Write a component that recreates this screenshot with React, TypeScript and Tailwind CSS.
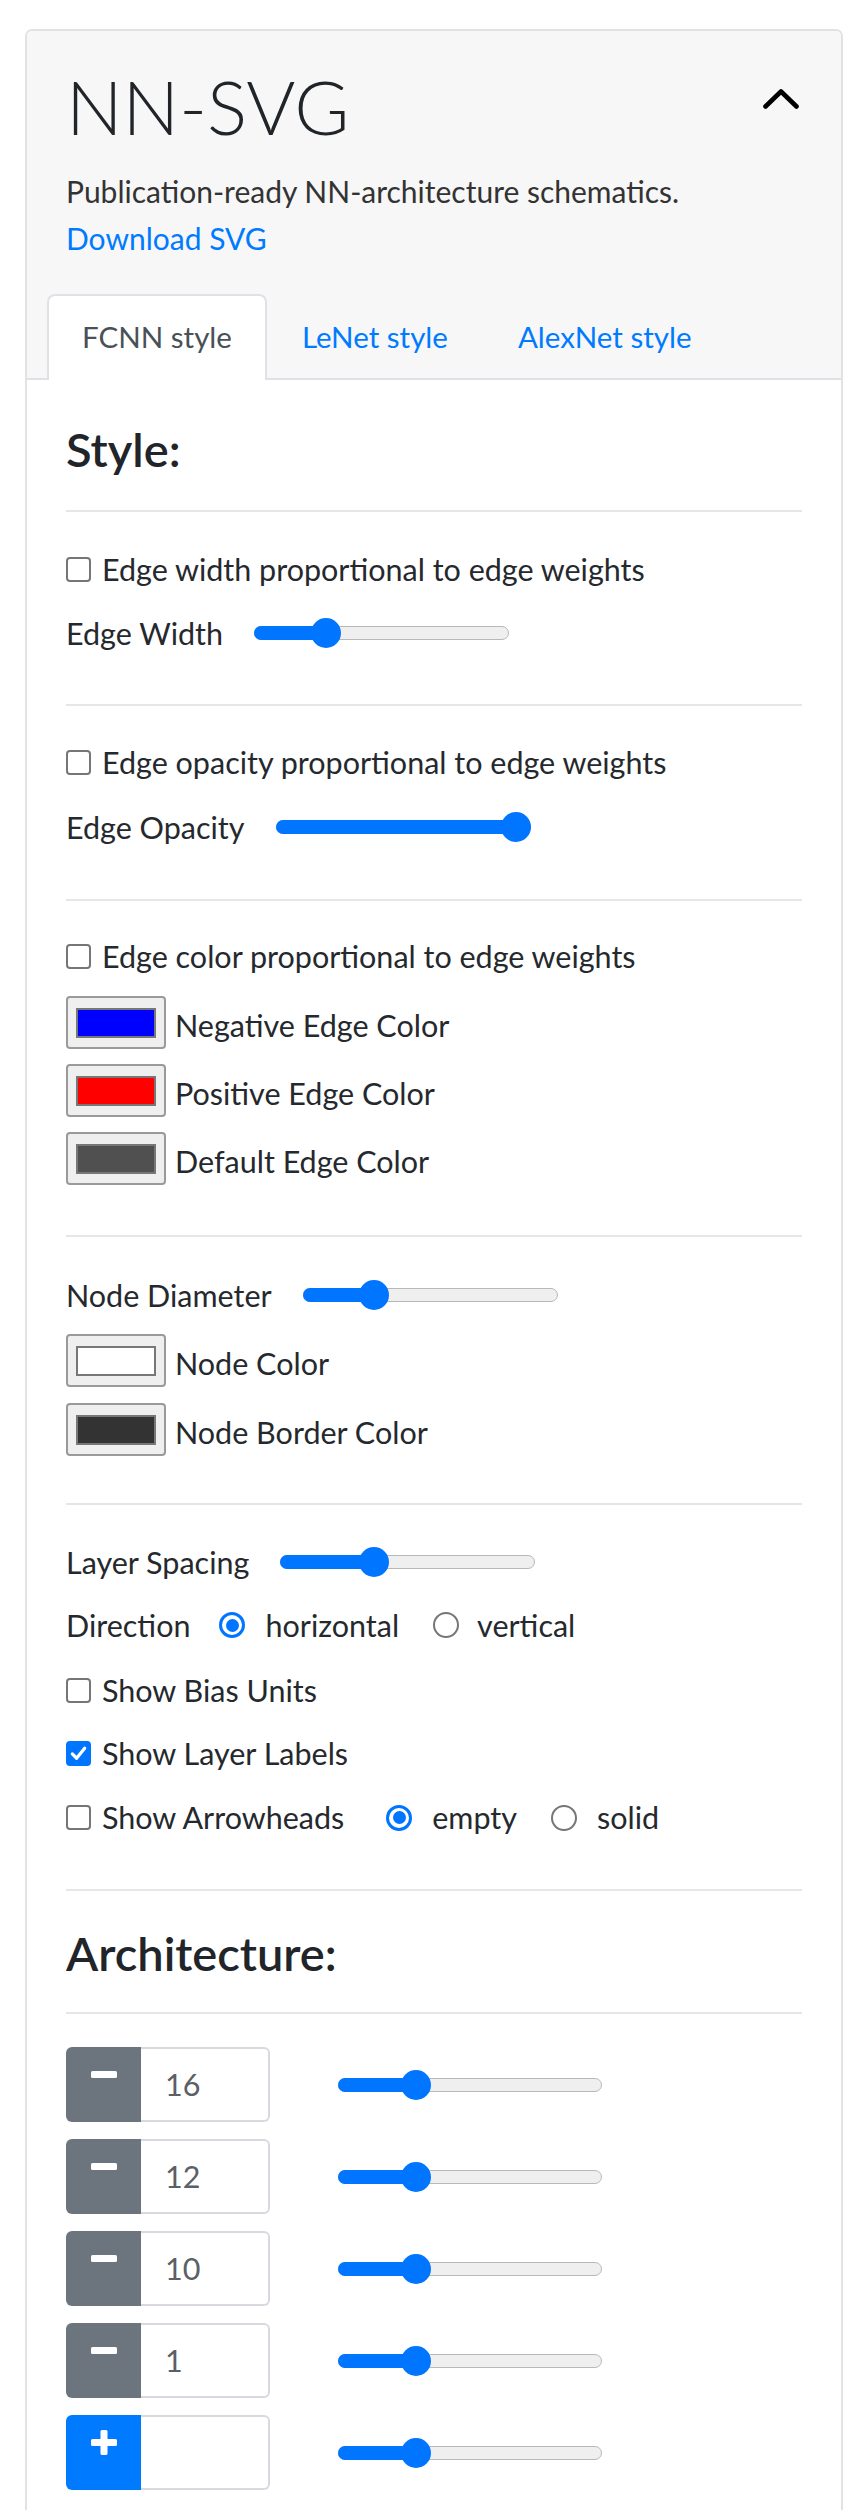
import React from 'react';

const font = "font-['Lato',sans-serif]";

const Checkbox = ({ checked = false }: { checked?: boolean }) =>
  checked ? (
    <span className="flex h-[25px] w-[25px] shrink-0 items-center justify-center rounded-[4px] bg-[#0075ff]">
      <svg width="19" height="19" viewBox="0 0 20 20">
        <polyline points="3.5,10.5 8,15 16.5,4.5" fill="none" stroke="#fff" strokeWidth="3.4" strokeLinecap="round" strokeLinejoin="round" />
      </svg>
    </span>
  ) : (
    <span className="block h-[25px] w-[25px] shrink-0 rounded-[4px] border-2 border-[#767676] bg-white" />
  );

const Radio = ({ checked = false }: { checked?: boolean }) =>
  checked ? (
    <span className="flex h-[26px] w-[26px] shrink-0 items-center justify-center rounded-full border-[3px] border-[#0075ff] bg-white">
      <span className="block h-[13px] w-[13px] rounded-full bg-[#0075ff]" />
    </span>
  ) : (
    <span className="block h-[26px] w-[26px] shrink-0 rounded-full border-2 border-[#767676] bg-white" />
  );

const Slider = ({ value, width = 255 }: { value: number; width?: number }) => {
  const center = 15 + (width - 30) * value;
  return (
    <div className="relative flex h-[30px] shrink-0 items-center" style={{ width }}>
      <div className="h-[14px] w-full rounded-full border border-[#b8b8b8] bg-[#efefef]" />
      <div className="absolute left-0 top-[8px] h-[14px] rounded-l-full bg-[#0075ff]" style={{ width: center }} />
      <div className="absolute top-0 h-[30px] w-[30px] rounded-full bg-[#0075ff]" style={{ left: center - 15 }} />
    </div>
  );
};

const Swatch = ({ color, label }: { color: string; label: string }) => (
  <div className="flex items-end">
    <div className="flex h-[53px] w-[100px] shrink-0 items-center justify-center rounded-[4px] border-2 border-[#9a9a9a] bg-[#efefef]">
      <div className="h-[30px] w-[80px] border-2 border-[#777777]" style={{ backgroundColor: color }} />
    </div>
    <span className="ml-[9px] h-[47px] leading-[47px]">{label}</span>
  </div>
);

const Hr = ({ className }: { className: string }) => <div className={`h-[2px] bg-[#e6e6e6] ${className}`} />;

const Row = ({ className, children }: { className: string; children: React.ReactNode }) => (
  <div className={`flex h-[47px] items-center leading-[47px] ${className}`}>{children}</div>
);

const ArchRow = ({ value, add = false, className = '' }: { value: string; add?: boolean; className?: string }) => (
  <div className={`flex h-[75px] items-center ${className}`}>
    <div className={`flex h-[75px] w-[75px] shrink-0 justify-center rounded-l-[6px] pt-[15px] ${add ? 'bg-[#007bff]' : 'bg-[#6c757d]'}`}>
      {add ? (
        <svg width="26" height="25" viewBox="0 0 26 25">
          <rect x="9.5" y="0" width="7" height="25" rx="1.5" fill="#fff" />
          <rect x="0" y="9" width="26" height="7" rx="1.5" fill="#fff" />
        </svg>
      ) : (
        <svg width="26" height="25" viewBox="0 0 26 25">
          <rect x="0" y="9" width="26" height="7" rx="1.5" fill="#fff" />
        </svg>
      )}
    </div>
    <div className="h-[75px] w-[129px] shrink-0 rounded-r-[6px] border-2 border-l-0 border-[#d6dadf] bg-white pl-[24px] leading-[71px] text-[#5a6066]">
      {value}
    </div>
    <div className="ml-[68px]">
      <Slider value={0.27} width={264} />
    </div>
  </div>
);

export default function App() {
  return (
    <div className={`min-h-screen bg-white pl-[25px] pr-[19px] pt-[29px] text-[30.5px] text-[#25292d] ${font}`}>
      <div className="overflow-hidden rounded-[7px] border-2 border-[#e2e2e2]">
        {/* header */}
        <div className="border-b-2 border-[#dee2e6] bg-[#f7f7f7] px-[39px] pt-[35px]">
          <div className="flex items-start justify-between">
            <h1 className="h-[80px] text-[75px] font-light leading-[80px] text-[#212529]">NN-SVG</h1>
            <svg className="mr-[3px] mt-[23px]" width="36" height="20" viewBox="0 0 36 20">
              <polyline points="2.5,17.5 18,2.5 33.5,17.5" fill="none" stroke="#000" strokeWidth="4.6" strokeLinecap="round" strokeLinejoin="round" />
            </svg>
          </div>
          <p className="mt-[21.5px] text-[30px] leading-[47px] text-[#333]">Publication-ready NN-architecture schematics.</p>
          <a className="block text-[30px] leading-[47px] text-[#007bff]">Download SVG</a>
          <div className="-ml-[19px] mt-[32.5px] flex text-[29.5px]">
            <div className="-mb-[2px] rounded-t-[8px] border-2 border-b-0 border-[#dee2e6] bg-white px-[33px] pb-[18.5px] pt-[16.5px] leading-[47px] text-[#495057]">
              FCNN style
            </div>
            <div className="-mb-[2px] border-2 border-transparent px-[33px] pb-[18.5px] pt-[16.5px] leading-[47px] text-[#007bff]">
              LeNet style
            </div>
            <div className="-mb-[2px] border-2 border-transparent px-[33px] pb-[18.5px] pt-[16.5px] leading-[47px] text-[#007bff]">
              AlexNet style
            </div>
          </div>
        </div>

        {/* body */}
        <div className="bg-white px-[39px] pb-[40px] pt-[42px]">
          <h4 className="h-[54px] text-[47px] font-semibold leading-[54px] text-[#212529]">Style:</h4>
          <Hr className="mt-[34px]" />

          <Row className="mt-[33.5px]">
            <Checkbox />
            <span className="ml-[11px]">Edge width proportional to edge weights</span>
          </Row>
          <Row className="mt-[17px]">
            <span>Edge Width</span>
            <div className="ml-[31px]">
              <Slider value={0.253} />
            </div>
          </Row>
          <Hr className="mt-[47.5px]" />

          <Row className="mt-[33px]">
            <Checkbox />
            <span className="ml-[11px]">Edge opacity proportional to edge weights</span>
          </Row>
          <Row className="mt-[17.5px]">
            <span>Edge Opacity</span>
            <div className="ml-[31px]">
              <Slider value={1} />
            </div>
          </Row>
          <Hr className="mt-[48.5px]" />

          <Row className="mt-[32px]">
            <Checkbox />
            <span className="ml-[11px]">Edge color proportional to edge weights</span>
          </Row>
          <div className="mt-[16px]">
            <Swatch color="#0000ff" label="Negative Edge Color" />
          </div>
          <div className="mt-[15px]">
            <Swatch color="#ff0000" label="Positive Edge Color" />
          </div>
          <div className="mt-[15px]">
            <Swatch color="#505050" label="Default Edge Color" />
          </div>
          <Hr className="mt-[50px]" />

          <Row className="mt-[34.5px]">
            <span>Node Diameter</span>
            <div className="ml-[31px]">
              <Slider value={0.249} />
            </div>
          </Row>
          <div className="mt-[15.5px]">
            <Swatch color="#ffffff" label="Node Color" />
          </div>
          <div className="mt-[16px]">
            <Swatch color="#333333" label="Node Border Color" />
          </div>
          <Hr className="mt-[47px]" />

          <Row className="mt-[33.5px]">
            <span>Layer Spacing</span>
            <div className="ml-[31px]">
              <Slider value={0.351} />
            </div>
          </Row>
          <Row className="mt-[16px]">
            <span>Direction</span>
            <span className="ml-[29px]">
              <Radio checked />
            </span>
            <span className="ml-[20px]">horizontal</span>
            <span className="ml-[34px]">
              <Radio />
            </span>
            <span className="ml-[18px]">vertical</span>
          </Row>
          <Row className="mt-[18px]">
            <Checkbox />
            <span className="ml-[11px]">Show Bias Units</span>
          </Row>
          <Row className="mt-[16.5px]">
            <Checkbox checked />
            <span className="ml-[11px]">Show Layer Labels</span>
          </Row>
          <Row className="mt-[17px]">
            <Checkbox />
            <span className="ml-[11px]">Show Arrowheads</span>
            <span className="ml-[42px]">
              <Radio checked />
            </span>
            <span className="ml-[20px]">empty</span>
            <span className="ml-[34px]">
              <Radio />
            </span>
            <span className="ml-[20px]">solid</span>
          </Row>
          <Hr className="mt-[48px]" />

          <h4 className="mt-[35px] h-[54px] text-[47px] font-semibold leading-[54px] text-[#212529]">Architecture:</h4>
          <Hr className="mt-[32px]" />

          <ArchRow className="mt-[33px]" value="16" />
          <ArchRow className="mt-[17px]" value="12" />
          <ArchRow className="mt-[17px]" value="10" />
          <ArchRow className="mt-[17px]" value="1" />
          <ArchRow className="mt-[17px]" value="" add />
        </div>
      </div>
    </div>
  );
}
